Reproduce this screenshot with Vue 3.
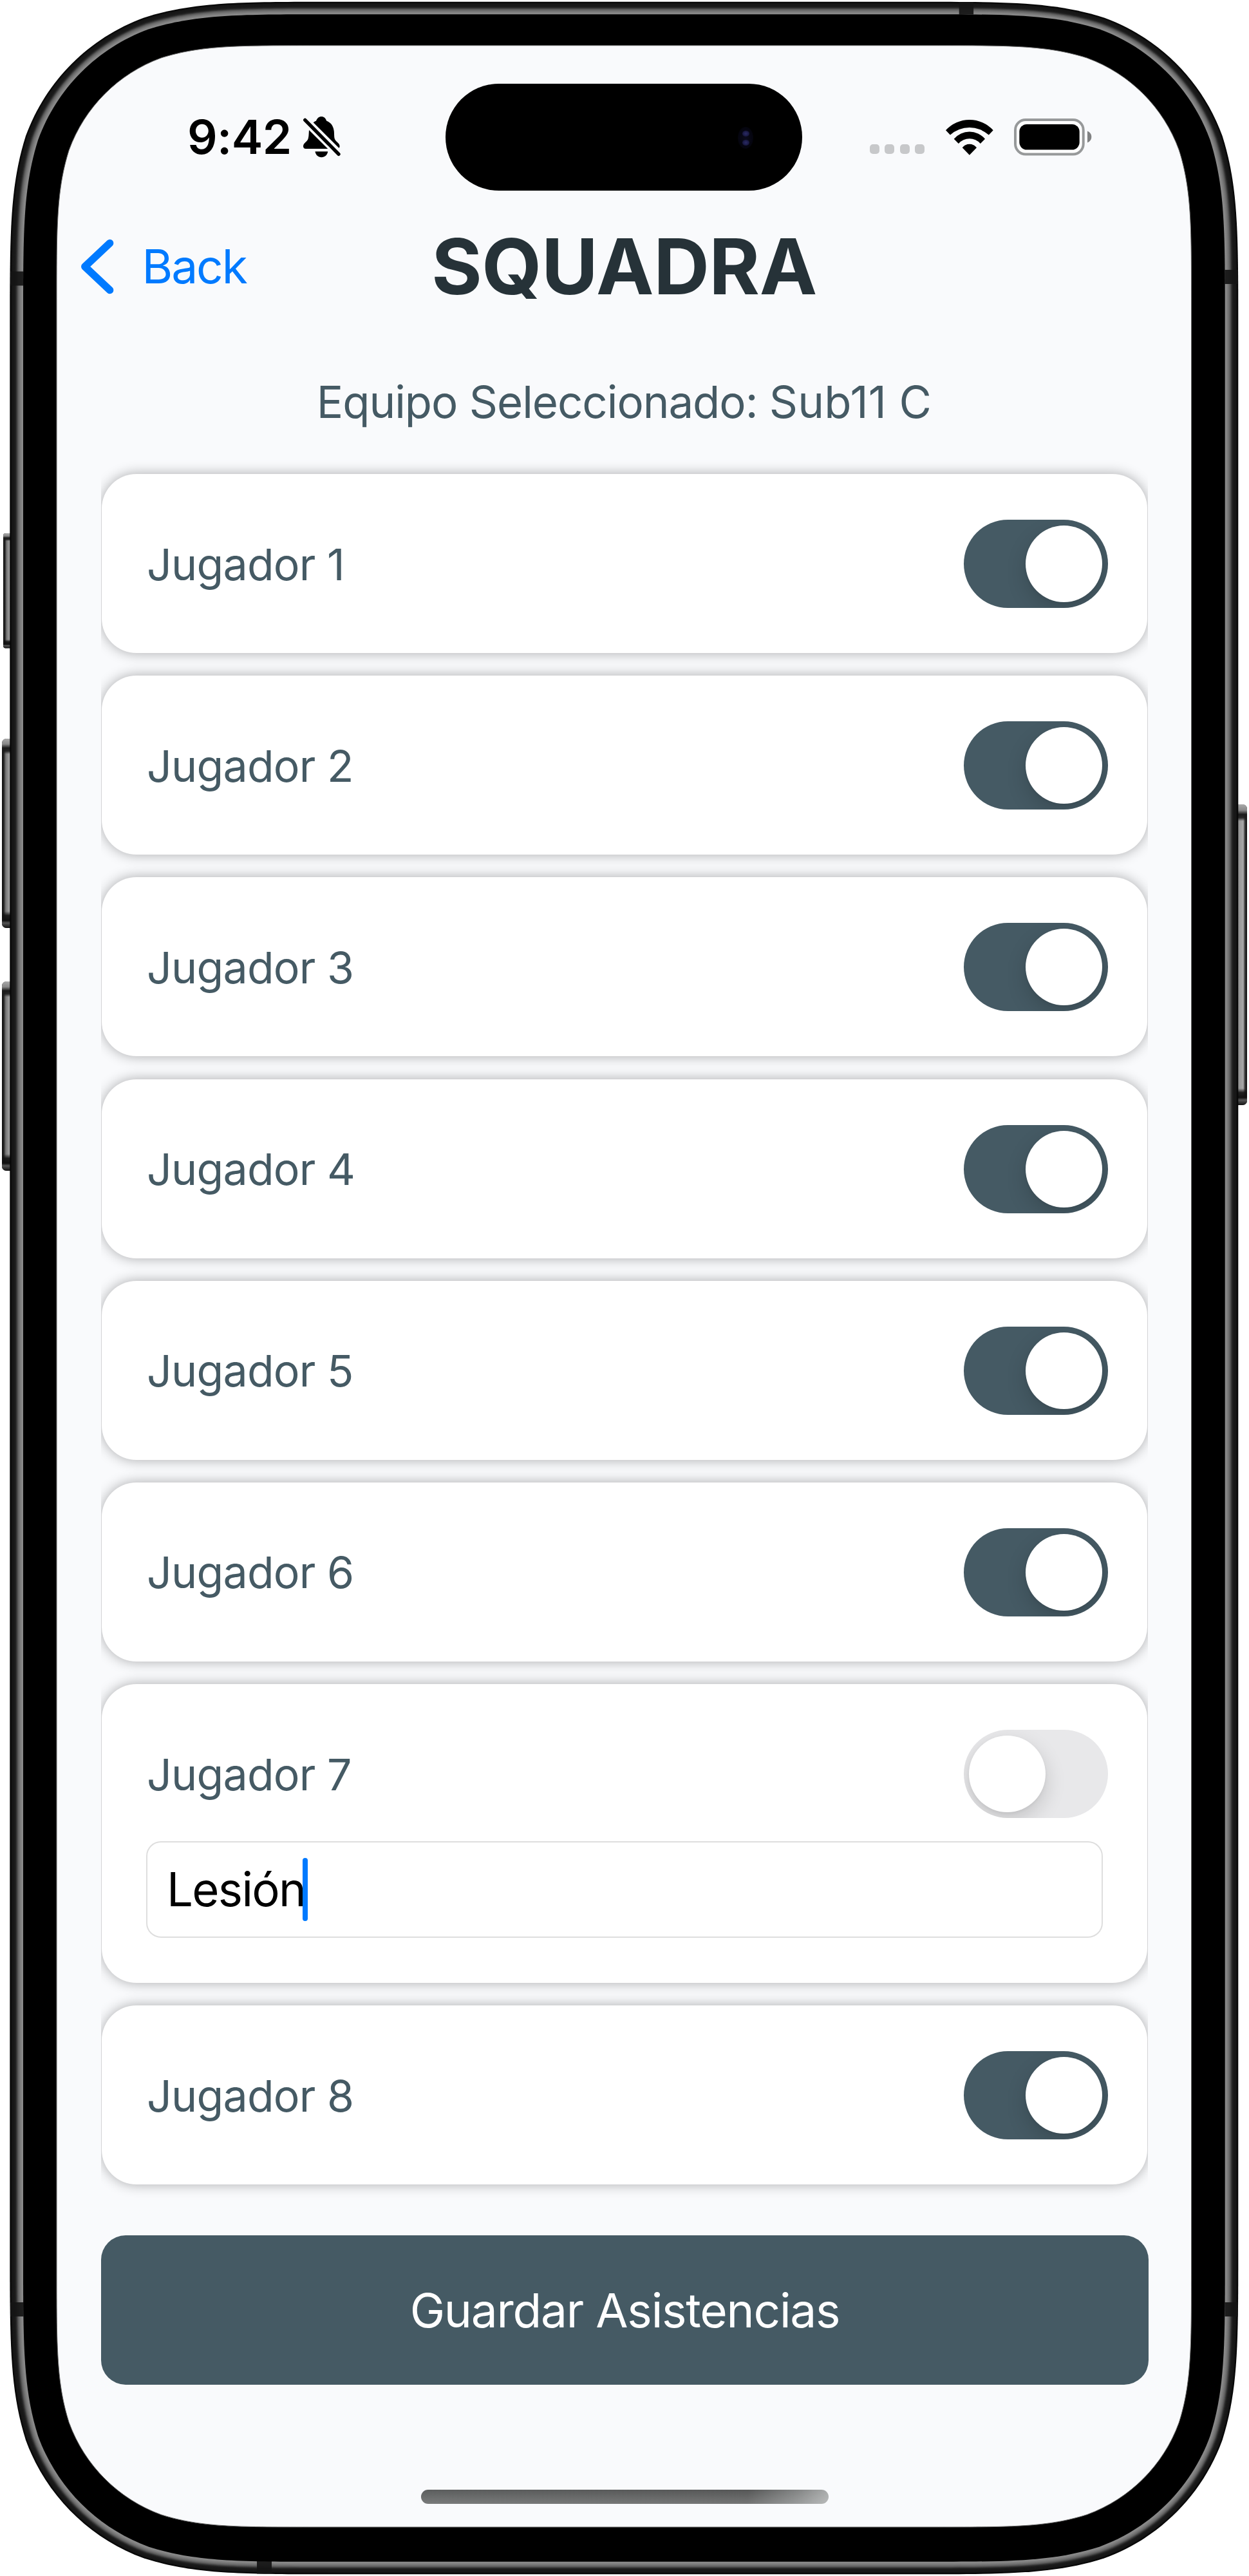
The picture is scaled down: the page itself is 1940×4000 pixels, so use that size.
<script setup>
import { ref } from 'vue'

const players = ref([
  { id: 1, present: true },
  { id: 2, present: true },
  { id: 3, present: true },
  { id: 4, present: true },
  { id: 5, present: true },
  { id: 6, present: true },
  { id: 7, present: false, reason: 'Lesión' },
  { id: 8, present: true },
])

// Rounded rectangle with continuous-curvature corners.
function squircle(x0, y0, x1, y1, r) {
  const a = 1.52866 * r, b = 1.08849 * r, c = 0.86841 * r
  const d = 0.63149 * r, e = 0.07491 * r, f = 0.37282 * r, g = 0.16906 * r
  return [
    `M${x0 + a} ${y0} L${x1 - a} ${y0}`,
    `C${x1 - b} ${y0} ${x1 - c} ${y0} ${x1 - d} ${y0 + e}`,
    `C${x1 - f} ${y0 + g} ${x1 - g} ${y0 + f} ${x1 - e} ${y0 + d}`,
    `C${x1} ${y0 + c} ${x1} ${y0 + b} ${x1} ${y0 + a} L${x1} ${y1 - a}`,
    `C${x1} ${y1 - b} ${x1} ${y1 - c} ${x1 - e} ${y1 - d}`,
    `C${x1 - g} ${y1 - f} ${x1 - f} ${y1 - g} ${x1 - d} ${y1 - e}`,
    `C${x1 - c} ${y1} ${x1 - b} ${y1} ${x1 - a} ${y1} L${x0 + a} ${y1}`,
    `C${x0 + b} ${y1} ${x0 + c} ${y1} ${x0 + d} ${y1 - e}`,
    `C${x0 + f} ${y1 - g} ${x0 + g} ${y1 - f} ${x0 + e} ${y1 - d}`,
    `C${x0} ${y1 - c} ${x0} ${y1 - b} ${x0} ${y1 - a} L${x0} ${y0 + a}`,
    `C${x0} ${y0 + b} ${x0} ${y0 + c} ${x0 + e} ${y0 + d}`,
    `C${x0 + g} ${y0 + f} ${x0 + f} ${y0 + g} ${x0 + d} ${y0 + e}`,
    `C${x0 + c} ${y0} ${x0 + b} ${y0} ${x0 + a} ${y0}Z`,
  ].join(' ')
}

// Metal rim: one ring per tone, from the outer edge inwards.
const tones = [5, 10, 18, 22, 24, 24, 25, 27, 32, 42, 58, 76, 92, 104, 112, 120, 126, 132, 136, 138]
const rings = tones.map((t, i) => ({
  d: squircle(15.3 + i * 1.02, 2.7 + i * 0.97, 1923.3 - i * 1.02, 3997.3 - i * 0.97, 330 - i * 1.05),
  fill: `rgb(${t},${t},${t})`,
}))
const bezel = squircle(36, 22.2, 1902.7, 3977.8, 309)
const glass = squircle(88, 70.7, 1850.5, 3924, 257)
</script>

<template>
  <main class="device">
    <svg class="frame" width="1940" height="4000" viewBox="0 0 1940 4000" aria-hidden="true">
      <defs>
        <linearGradient id="keyLeft" x1="0" x2="1" y1="0" y2="0">
          <stop offset="0" stop-color="#111" />
          <stop offset=".14" stop-color="#222" />
          <stop offset=".3" stop-color="#777" />
          <stop offset=".6" stop-color="#a2a2a2" />
          <stop offset="1" stop-color="#6e6e6e" />
        </linearGradient>
        <linearGradient id="keyRight" x1="1" x2="0" y1="0" y2="0">
          <stop offset="0" stop-color="#111" />
          <stop offset=".14" stop-color="#333" />
          <stop offset=".26" stop-color="#a8a8a8" />
          <stop offset=".6" stop-color="#939393" />
          <stop offset="1" stop-color="#777" />
        </linearGradient>
        <linearGradient id="keyCap" x1="0" x2="0" y1="0" y2="1">
          <stop offset="0" stop-color="#aaa" />
          <stop offset=".35" stop-color="#888" />
          <stop offset=".6" stop-color="#1a1a1a" />
          <stop offset=".8" stop-color="#1a1a1a" stop-opacity=".9" />
          <stop offset="1" stop-color="#1a1a1a" stop-opacity="0" />
        </linearGradient>
        <linearGradient id="keyFoot" x1="0" x2="0" y1="1" y2="0">
          <stop offset="0" stop-color="#111" />
          <stop offset=".3" stop-color="#555" />
          <stop offset=".45" stop-color="#111" />
          <stop offset=".75" stop-color="#111" stop-opacity=".9" />
          <stop offset="1" stop-color="#111" stop-opacity="0" />
        </linearGradient>
      </defs>

      <rect x="5" y="828" width="18" height="178.5" rx="4" fill="url(#keyLeft)" />
      <rect x="5" y="828" width="18" height="12" rx="4" fill="url(#keyCap)" />
      <rect x="5" y="993" width="18" height="13.5" rx="4" fill="url(#keyFoot)" />
      <rect x="3" y="1147" width="20" height="294" rx="7" fill="url(#keyLeft)" />
      <rect x="3" y="1147" width="20" height="24" rx="7" fill="url(#keyCap)" />
      <rect x="3" y="1415" width="20" height="26" rx="7" fill="url(#keyFoot)" />
      <rect x="3" y="1524" width="20" height="294" rx="7" fill="url(#keyLeft)" />
      <rect x="3" y="1524" width="20" height="24" rx="7" fill="url(#keyCap)" />
      <rect x="3" y="1792" width="20" height="26" rx="7" fill="url(#keyFoot)" />
      <rect x="1914" y="1249" width="23" height="467" rx="7" fill="url(#keyRight)" />
      <rect x="1914" y="1249" width="23" height="26" rx="7" fill="url(#keyCap)" />
      <rect x="1914" y="1690" width="23" height="26" rx="7" fill="url(#keyFoot)" />

      <path v-for="(ring, i) in rings" :key="i" :d="ring.d" :fill="ring.fill" />

      <g fill="#141414" fill-opacity=".93">
        <rect x="16" y="421.5" width="20.5" height="22" />
        <rect x="1902.5" y="419" width="20" height="22" />
        <rect x="1489.7" y="3.4" width="22.4" height="19" />
        <rect x="16" y="3575" width="20.5" height="22" />
        <rect x="1902.5" y="3575" width="20" height="22" />
        <rect x="399" y="3977" width="23" height="19.5" />
      </g>

      <path :d="bezel" fill="#000" />
      <path :d="glass" fill="#f9fafc" stroke="#6d6d6d" stroke-width="1" />
    </svg>

    <section class="screen">
      <header class="status">
        <div class="status-left">
          <span class="time">9:42</span>
          <svg class="bell" width="58" height="64" viewBox="0 0 58 64">
            <path d="M15.7 9.3C17.5 7.8 19 7.2 20 6.8C21.5 2.6 24.5 0 28.2 0C32 0 35 2.6 36.2 6.8C43.5 9.5 47 15.5 47.8 23C48.3 29 47.8 33 49.5 36C51.5 39.5 56.6 41.5 56.6 46C56.6 47.5 56.2 48.3 55.4 48.8Z" />
            <path d="M9 21L38.2 50H3.8C1.5 50 0 48.5 0 46.3C0 41.8 4.5 40 6.8 36.3C8.8 33 8.5 27 9 21Z" />
            <path d="M18.5 54.3H38.2C37.6 59.5 33.5 63.3 28.3 63.3C23.2 63.3 19.2 59.5 18.5 54.3Z" />
            <path d="M2.8 5.3L55 58.3" fill="none" stroke="#000" stroke-width="5.4" stroke-linecap="round" />
          </svg>
        </div>
        <div class="island">
          <span class="lens"><i></i><i></i></span>
        </div>
        <div class="status-right">
          <div class="signal"><i v-for="n in 4" :key="n"></i></div>
          <svg class="wifi" width="74" height="55" viewBox="0 0 74 55">
            <path d="M0 16.3A49.8 49.8 0 0 1 73.7 16.3L66.8 23.6A44.6 44.6 0 0 0 6.9 23.6Z" />
            <path d="M12.7 29.7A31.6 31.6 0 0 1 61 29.7L53.8 37A22.6 22.6 0 0 0 19.9 37Z" />
            <path d="M25.7 43.2A14 14 0 0 1 48 43.2L36.85 54.8Z" />
          </svg>
          <svg class="battery" width="121" height="58" viewBox="0 0 121 58">
            <rect x="2" y="2" width="105.7" height="53.5" rx="16" fill="#fff" stroke="#97999a" stroke-width="4" />
            <rect x="8.3" y="9" width="93.4" height="39.5" rx="11.5" />
            <path d="M114 19.5C118 21 120.3 24.5 120.3 28.5C120.3 32.5 118 36 114 37.5Z" fill="#808182" />
          </svg>
        </div>
      </header>

      <nav class="nav">
        <a class="back">
          <svg width="54" height="90" viewBox="0 0 54 90">
            <path d="M45.6 8.5L6.8 45L45.6 81.5" fill="none" stroke="#007aff" stroke-width="11.5" stroke-linecap="round" stroke-linejoin="round" />
          </svg>
          <span>Back</span>
        </a>
        <h1>SQUADRA</h1>
      </nav>

      <p class="team">Equipo Seleccionado: <span>Sub11 C</span></p>

      <ul class="list">
        <li v-for="p in players" :key="p.id" class="card">
          <div class="row">
            <span class="name">Jugador {{ p.id }}</span>
            <span class="toggle" :class="{ on: p.present }"><b></b></span>
          </div>
          <div v-if="!p.present" class="field">
            <span>{{ p.reason }}</span><i class="caret"></i>
          </div>
        </li>
      </ul>

      <button class="save">Guardar Asistencias</button>

      <div class="home"></div>
    </section>
  </main>
</template>

<style>
html,
body {
  margin: 0;
  background: #fff;
}
</style>

<style scoped>
.device {
  position: relative;
  box-sizing: border-box;
  width: 1940px;
  height: 4000px;
  padding: 71px 89px 0 88px;
  overflow: hidden;
  background: #fff;
  font-family: Inter, "Liberation Sans", sans-serif;
}
.frame {
  position: absolute;
  inset: 0;
  display: block;
}
.screen {
  position: relative;
  display: flex;
  flex-direction: column;
  height: 3853px;
}
svg {
  display: block;
  flex: none;
}

.status {
  display: flex;
  align-items: center;
  height: 166px;
  padding-top: 59px;
}
.status-left {
  display: flex;
  align-items: center;
  box-sizing: border-box;
  width: 604px;
  padding-left: 203px;
}
.time {
  width: 180px;
  font-size: 73px;
  line-height: 88px;
  font-weight: 600;
  letter-spacing: -0.6px;
  color: #000;
}
.island {
  display: flex;
  align-items: center;
  justify-content: flex-end;
  box-sizing: border-box;
  width: 554px;
  height: 166px;
  padding-right: 76px;
  border-radius: 83px;
  background: #000;
}
.lens {
  display: flex;
  flex-direction: column;
  align-items: center;
  justify-content: center;
  gap: 5px;
  width: 24px;
  height: 34px;
  margin-top: 2px;
  border-radius: 50%;
  background: radial-gradient(#0b0b1c, #050510 60%, #000);
}
.lens i {
  width: 11px;
  height: 9px;
  border-radius: 50%;
  background: radial-gradient(#2b2b66, #15153a 75%);
}
.status-right {
  display: flex;
  align-items: center;
  padding-left: 105px;
}
.signal {
  display: flex;
  gap: 8.4px;
  margin-top: 37px;
}
.signal i {
  width: 15px;
  height: 15px;
  border-radius: 5px;
  background: #c7c8ca;
}
.wifi {
  margin-left: 33px;
}
.battery {
  margin-left: 32px;
}

.nav {
  display: grid;
  grid-template-columns: 1fr auto 1fr;
  align-items: center;
  height: 236px;
}
.back {
  display: flex;
  align-items: center;
  gap: 41.5px;
  padding-left: 37px;
  font-size: 73px;
  letter-spacing: -2.1px;
  color: #007aff;
}
.back span {
  margin-top: -2px;
}
h1 {
  margin: 0;
  font-size: 120px;
  line-height: 140px;
  font-weight: 700;
  letter-spacing: -0.5px;
  color: #263238;
}
.team {
  margin: 0;
  height: 204px;
  font-size: 69px;
  line-height: 184px;
  letter-spacing: -1.05px;
  text-align: center;
  color: #455a64;
}
.team span {
  letter-spacing: 0.2px;
}

.list {
  display: flex;
  flex-direction: column;
  gap: 35.2px;
  margin: 0 69px 0 70px;
  padding: 0;
  list-style: none;
  clip-path: inset(-60px -1px);
}
.card {
  box-sizing: border-box;
  padding: 71px 61.5px 70px 70px;
  border-radius: 54px;
  background: #fff;
  box-shadow: 0 0 20px rgba(0, 0, 0, 0.32);
}
.row {
  display: flex;
  align-items: center;
  justify-content: space-between;
  height: 137px;
}
.name {
  font-size: 68px;
  letter-spacing: -0.75px;
  color: #455a64;
}
.toggle {
  display: flex;
  align-items: center;
  box-sizing: border-box;
  width: 224px;
  height: 137px;
  padding: 0 8.5px;
  border-radius: 68.5px;
  background: #e8e8ea;
  overflow: hidden;
}
.toggle b {
  width: 119px;
  height: 119px;
  border-radius: 50%;
  background: #fff;
  box-shadow: 0 12px 32px rgba(0, 0, 0, 0.16), 0 2px 5px rgba(0, 0, 0, 0.05);
}
.toggle.on {
  justify-content: flex-end;
  background: #455a64;
}
.field {
  display: flex;
  align-items: center;
  box-sizing: border-box;
  height: 150px;
  margin: 35.5px 7.5px 0.5px -1px;
  padding-left: 30px;
  border: 2px solid #dedede;
  border-radius: 23px;
  font-size: 72.5px;
  letter-spacing: -1.7px;
  color: #000;
}
.caret {
  width: 8px;
  height: 98px;
  margin-left: -4px;
  border-radius: 4px;
  background: #007aff;
}

.save {
  height: 232px;
  margin: 79px 67px 0 69px;
  padding: 0;
  border: 0;
  border-radius: 38px;
  background: #455a64;
  color: #fff;
  font-family: inherit;
  font-size: 73px;
  letter-spacing: -1.25px;
}
.home {
  width: 633px;
  height: 22px;
  margin: 163px 0 0 566px;
  border-radius: 11px;
  background:
    linear-gradient(rgba(255, 255, 255, 0), rgba(255, 255, 255, 0.18)),
    linear-gradient(95deg, #5c5e5e 0%, #565757 80%, #828484 92%, #aaacac 100%);
}
</style>
